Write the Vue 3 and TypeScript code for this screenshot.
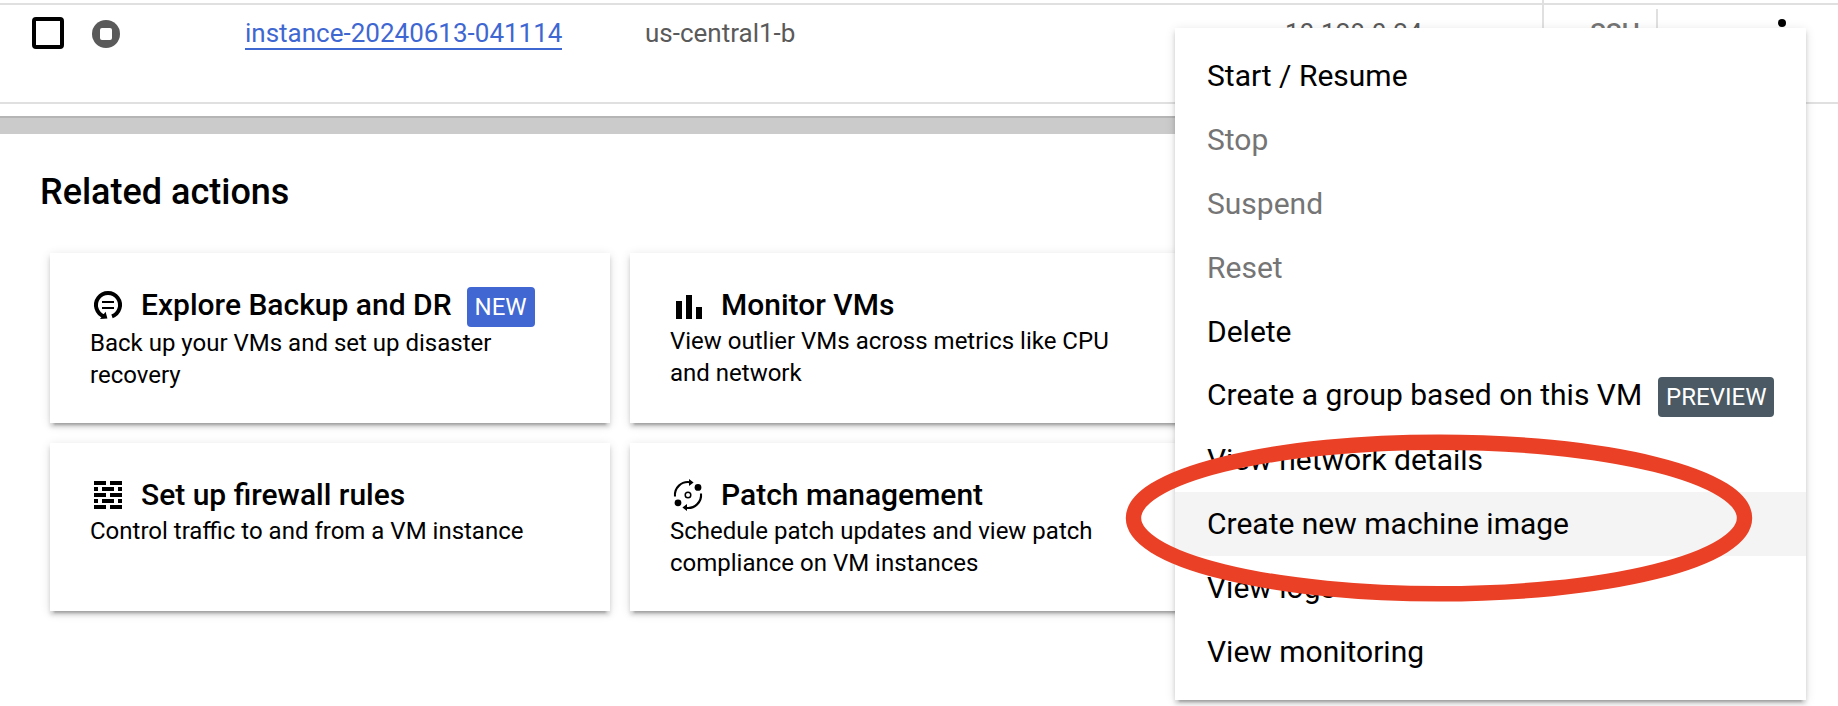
<script setup lang="ts">
interface ActionCard {
  icon: 'backup' | 'monitor' | 'firewall' | 'patch'
  title: string
  text: string
  badge?: string
}

interface MenuItem {
  label: string
  disabled?: boolean
  active?: boolean
  badge?: string
}

const cards: ActionCard[] = [
  { icon: 'backup', title: 'Explore Backup and DR', text: 'Back up your VMs and set up disaster recovery', badge: 'NEW' },
  { icon: 'monitor', title: 'Monitor VMs', text: 'View outlier VMs across metrics like CPU and network' },
  { icon: 'firewall', title: 'Set up firewall rules', text: 'Control traffic to and from a VM instance' },
  { icon: 'patch', title: 'Patch management', text: 'Schedule patch updates and view patch compliance on VM instances' },
]

const menu: MenuItem[] = [
  { label: 'Start / Resume' },
  { label: 'Stop', disabled: true },
  { label: 'Suspend', disabled: true },
  { label: 'Reset', disabled: true },
  { label: 'Delete' },
  { label: 'Create a group based on this VM', badge: 'PREVIEW' },
  { label: 'View network details' },
  { label: 'Create new machine image', active: true },
  { label: 'View logs' },
  { label: 'View monitoring' },
]
</script>

<template>
  <div class="page">
    <div class="table">
      <div class="row row-prev">
        <div class="cell-main"></div>
        <div class="cell-connect"></div>
      </div>
      <div class="row row-vm">
        <div class="cell-main">
          <span class="checkbox"></span>
          <svg class="status" width="28" height="28" viewBox="0 0 28 28">
            <circle cx="14" cy="14" r="14" fill="#5a5a5a" />
            <rect x="8" y="8" width="12" height="12" rx="2" fill="#fff" />
          </svg>
          <div class="name"><a class="link">instance-20240613-041114</a></div>
          <span class="zone">us-central1-b</span>
          <span class="ip">10.128.0.24</span>
        </div>
        <div class="cell-connect">
          <span class="ssh">SSH</span>
          <span class="divider"></span>
          <svg class="more" width="8" height="32" viewBox="0 0 8 32">
            <circle cx="4" cy="4" r="4" />
            <circle cx="4" cy="16" r="4" />
            <circle cx="4" cy="28" r="4" />
          </svg>
        </div>
      </div>
    </div>
    <div class="scrollbar"></div>

    <h2 class="heading">Related actions</h2>
    <div class="cards">
      <div v-for="card in cards" :key="card.title" class="card">
        <div class="card-head">
          <svg class="card-icon" width="36" height="36" viewBox="0 0 36 36">
            <template v-if="card.icon === 'backup'">
              <path d="M14 29.3A12 12 0 1 1 22 29.3" fill="none" stroke="#000" stroke-width="4" />
              <path d="M15.6 24.8L17.4 31.4L10 32Z" />
              <path d="M12 14h12v2H12zM12 20h12v2H12z" />
            </template>
            <path v-else-if="card.icon === 'monitor'" d="M6 14h6v18H6zM16 8h6v24h-6zM26 20h6v12h-6z" />
            <path
              v-else-if="card.icon === 'firewall'"
              d="M4 4h12v4H4zM20 4h12v4H20zM4 10h4v4H4zM12 10h12v4H12zM28 10h4v4h-4zM4 16h12v4H4zM20 16h12v4H20zM4 22h4v4H4zM12 22h12v4H12zM28 22h4v4h-4zM4 28h12v4H4zM20 28h12v4H20z"
            />
            <template v-else>
              <g fill="none" stroke="#000">
                <path d="M5 19.5A13 13 0 0 1 20 5.2M31 16.5A13 13 0 0 1 16 30.8" stroke-width="2.1" />
                <circle cx="18" cy="18" r="2.8" stroke-width="1.5" />
              </g>
              <path d="M19 2l4.6 3.5L19 9zM17 27l-4.6 3.5L17 34z" />
              <circle cx="28" cy="10.4" r="3.4" />
              <circle cx="8" cy="25.8" r="3.4" />
            </template>
          </svg>
          <span class="card-title">{{ card.title }}</span>
          <span v-if="card.badge" class="badge badge-new">{{ card.badge }}</span>
        </div>
        <p class="card-text">{{ card.text }}</p>
      </div>
    </div>

    <div class="menu">
      <div
        v-for="item in menu"
        :key="item.label"
        class="menu-item"
        :class="{ disabled: item.disabled, active: item.active, tagged: item.badge }"
      >
        <span class="menu-label">{{ item.label }}</span>
        <span v-if="item.badge" class="badge badge-preview">{{ item.badge }}</span>
      </div>
    </div>

    <svg class="marker" width="628" height="168" viewBox="0 0 628 168">
      <ellipse cx="314" cy="84" rx="305.5" ry="75.8" fill="none" stroke="#ea4025" stroke-width="15.4" />
    </svg>
  </div>
</template>

<style>
body {
  margin: 0;
  background: #fff;
}
</style>

<style scoped>
.page {
  position: relative;
  width: 1838px;
  height: 706px;
  overflow: hidden;
  background: #fff;
  color: #000;
  font-family: Roboto, sans-serif;
}

.row {
  display: grid;
  grid-template-columns: 1542px 1fr;
  border-bottom: 2px solid #e0e0e0;
}

.row-prev {
  height: 3px;
}

.row-vm {
  height: 97px;
}

.cell-main,
.cell-connect {
  display: flex;
  align-items: flex-start;
  font-size: 26px;
  line-height: 32px;
}

.cell-connect {
  border-left: 2px solid #e0e0e0;
}

.row-vm .cell-main {
  padding: 12px 0 0 32px;
  color: #5a5a5a;
}

.checkbox {
  box-sizing: border-box;
  width: 32px;
  height: 32px;
  border: 4px solid #000;
  border-radius: 4px;
}

.status {
  margin: 3px 0 0 28px;
}

.name {
  width: 400px;
  margin: 1px 0 0 125px;
}

.link {
  display: block;
  width: fit-content;
  line-height: 30px;
  border-bottom: 2px solid #3f67d2;
  color: #3f67d2;
}

.zone {
  width: 640px;
}

.ssh {
  width: 66px;
  margin: 12px 0 0 46px;
  color: #757575;
  font-weight: 500;
}

.divider {
  width: 2px;
  height: 48px;
  margin-top: 4px;
  background: #e0e0e0;
}

.more {
  margin: 14px 0 0 120px;
}

.scrollbar {
  box-sizing: border-box;
  width: 1500px;
  height: 18px;
  margin-top: 12px;
  border-top: 2px solid #b5b5b5;
  background: #cbcbcb;
}

.heading {
  margin: 36px 0 39px 40px;
  font-size: 36px;
  font-weight: 500;
  line-height: 44px;
}

.cards {
  display: grid;
  grid-template-columns: 560px 560px;
  gap: 20px;
  margin-left: 50px;
}

.card {
  padding: 34px 40px 32px;
  background: #fff;
  box-shadow:
    0 6px 2px -4px rgba(0, 0, 0, 0.2),
    0 4px 4px 0 rgba(0, 0, 0, 0.14),
    0 2px 10px 0 rgba(0, 0, 0, 0.12);
}

.card-head {
  display: flex;
  align-items: flex-start;
  min-height: 38px;
}

.card-title {
  margin-left: 15px;
  font-size: 30px;
  font-weight: 500;
  line-height: 35px;
}

.card-text {
  min-height: 64px;
  margin: 0;
  font-size: 24px;
  line-height: 32px;
}

.badge {
  padding: 0 8px;
  border-radius: 4px;
  color: #fff;
  font-size: 24px;
  line-height: 40px;
}

.badge-new {
  margin-left: 15px;
  background: #4067d2;
}

.badge-preview {
  margin: 13px 0 0 16px;
  background: #4a5963;
}

.menu {
  position: absolute;
  top: 28px;
  left: 1175px;
  box-sizing: border-box;
  width: 631px;
  padding: 16px 0;
  background: #fff;
  box-shadow:
    0 6px 2px -4px rgba(0, 0, 0, 0.2),
    0 4px 4px 0 rgba(0, 0, 0, 0.14),
    0 2px 10px 0 rgba(0, 0, 0, 0.12);
}

.menu-item {
  display: flex;
  align-items: flex-start;
  box-sizing: border-box;
  height: 64px;
  padding: 0 32px;
  font-size: 30px;
  white-space: nowrap;
}

.disabled {
  color: #757575;
}

.active {
  background: #f4f4f4;
}

.menu-label {
  margin-top: 14px;
  line-height: 35px;
}

.tagged .menu-label {
  margin-top: 13px;
}

.marker {
  position: absolute;
  top: 434px;
  left: 1125px;
}
</style>
